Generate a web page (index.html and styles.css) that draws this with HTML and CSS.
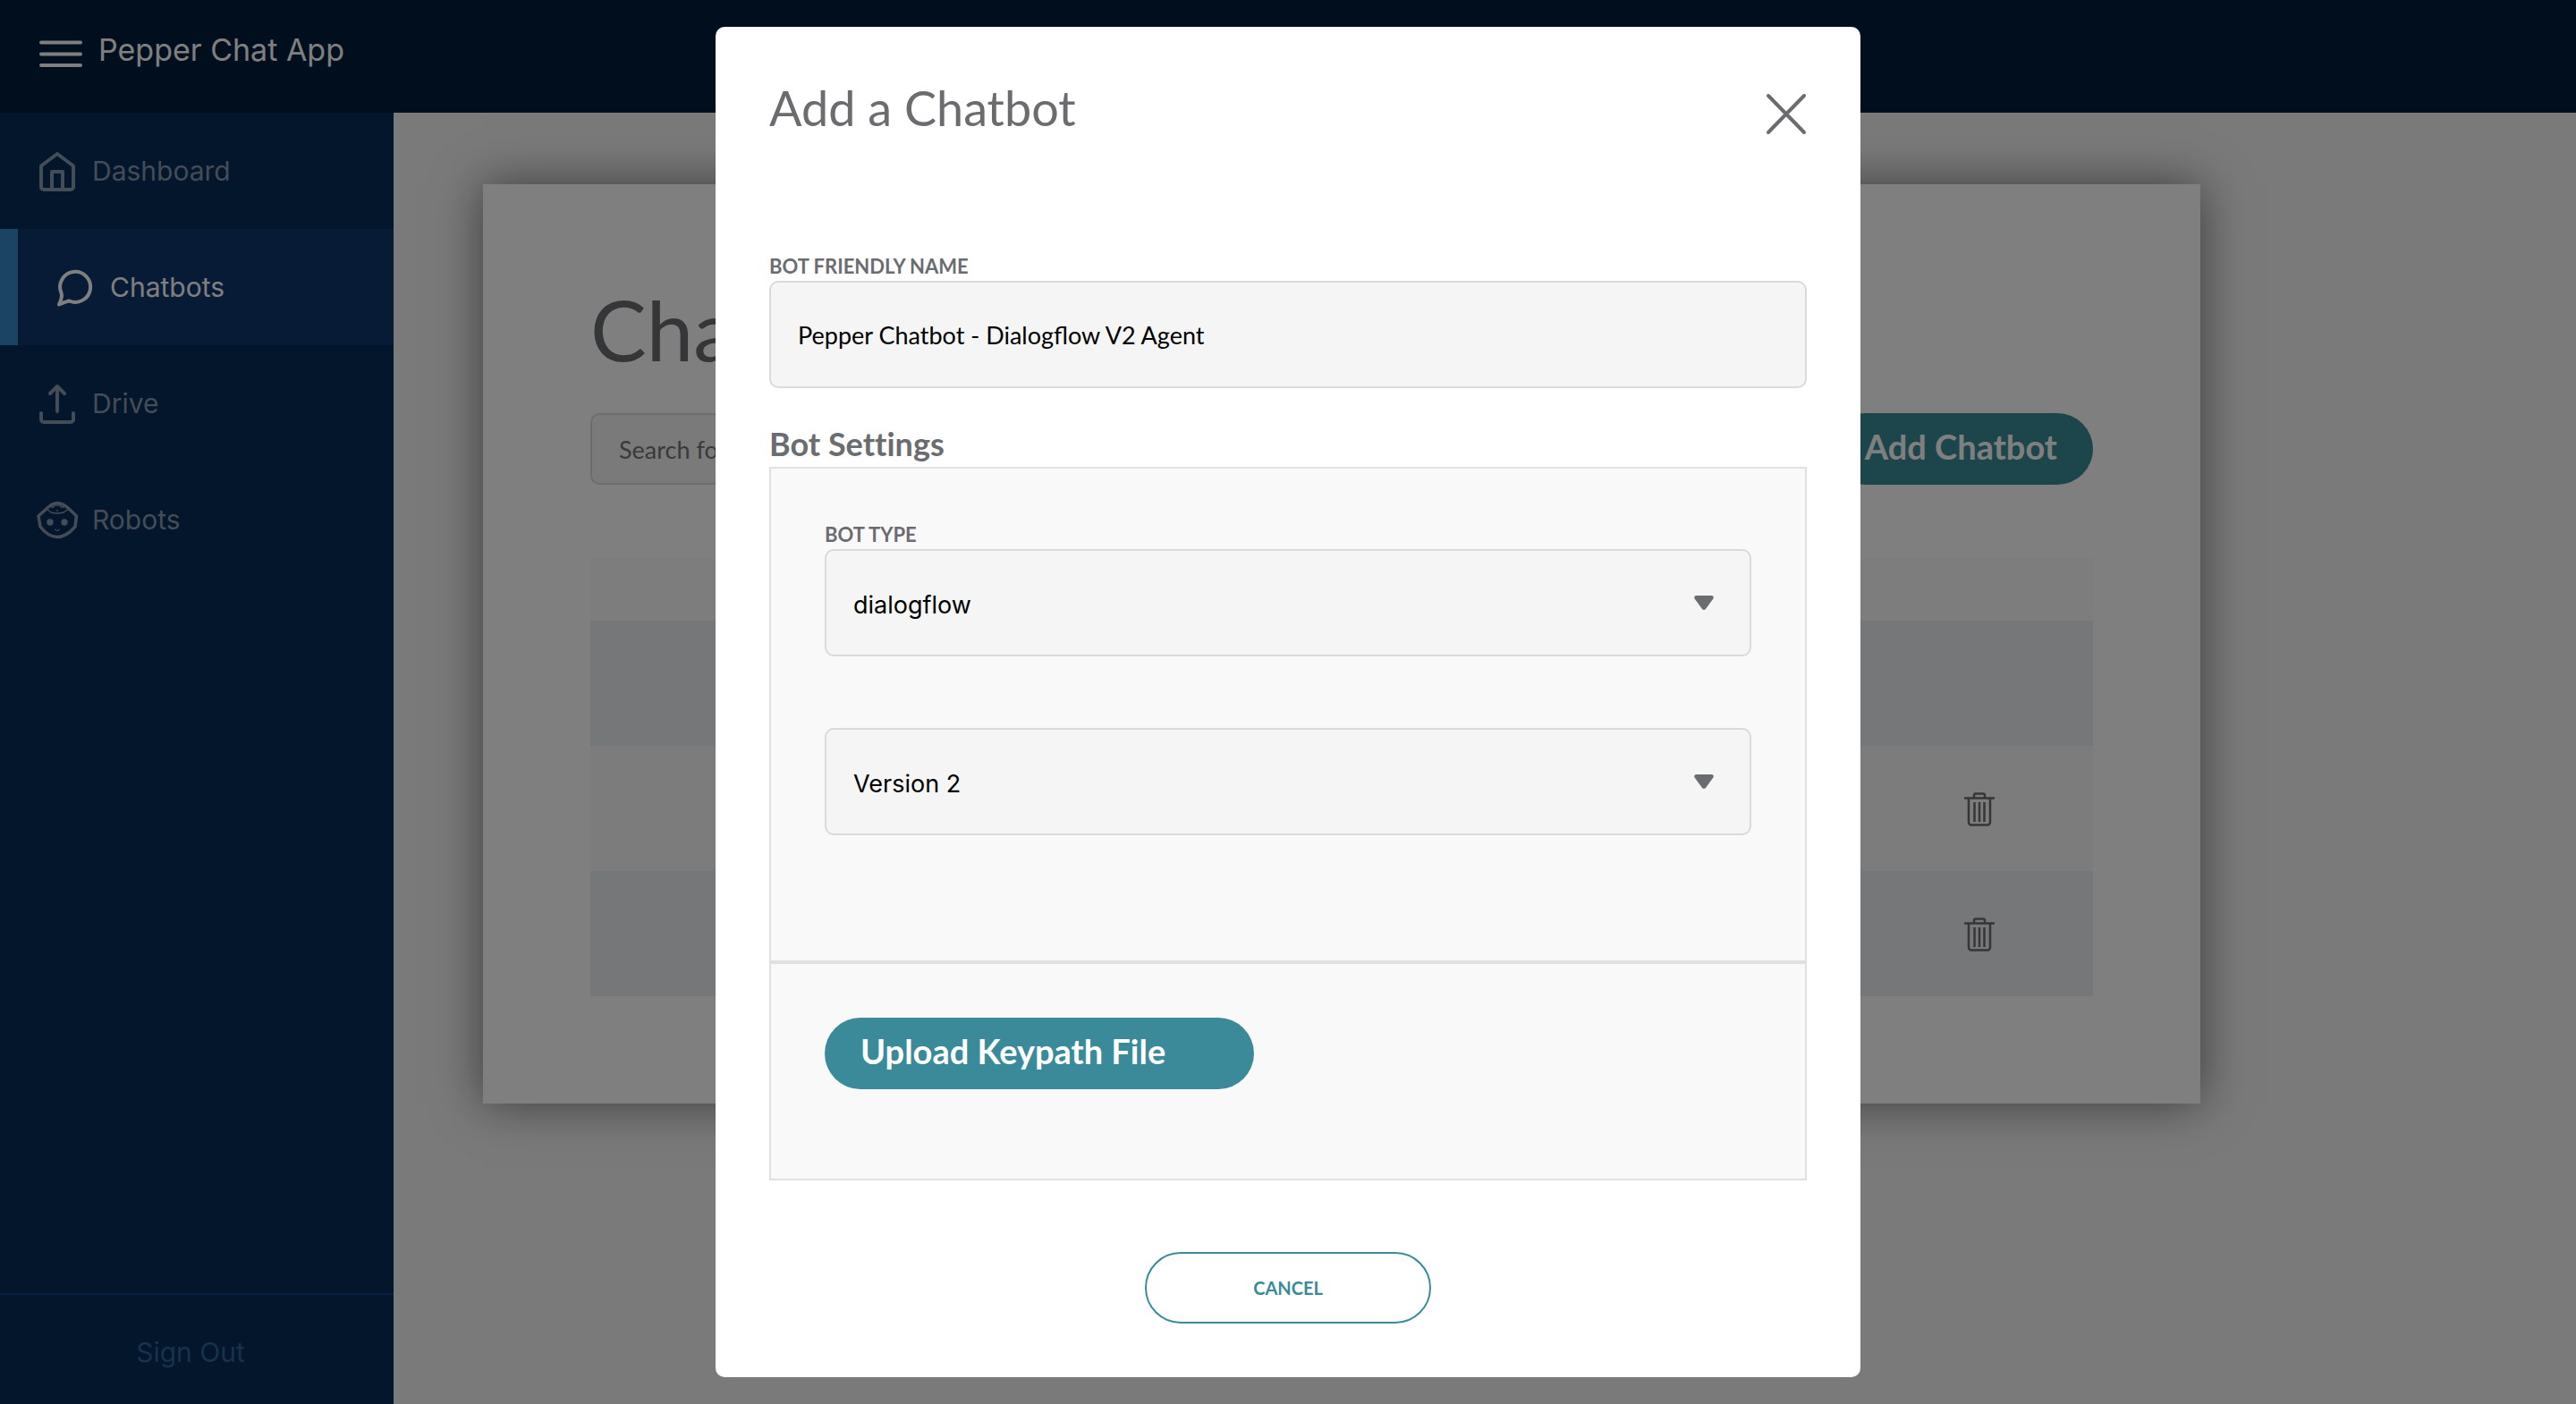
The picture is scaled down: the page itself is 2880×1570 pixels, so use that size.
FILE: index.html
```
<!DOCTYPE html>
<html lang="en">
<head>
<meta charset="utf-8">
<meta name="viewport" content="width=device-width, initial-scale=1">
<title>Pepper Chat App</title>
<link rel="stylesheet" href="styles.css">
</head>
<body>
<div class="app">
  <header class="topbar">
    <button class="icon-button" type="button" aria-label="Menu">
      <svg class="menu-icon" viewBox="0 0 48 40" fill="none" stroke="currentColor" stroke-width="4" stroke-linecap="round"><path d="M2 7.500h44M2 20.500h44M2 33h44"/></svg>
    </button>
    <span class="brand">Pepper Chat App</span>
  </header>
  <nav class="sidebar">
    <a class="nav-item" href="#dashboard">
      <svg class="nav-icon" viewBox="0 0 48 48" fill="none" stroke="currentColor" stroke-width="4" stroke-linejoin="round"><path d="M24 5 L42 18.500V42a3 3 0 0 1-3 3H9a3 3 0 0 1-3-3V18.500z"/><path d="M18 45V25h12v20"/></svg>
      <span>Dashboard</span>
    </a>
    <a class="nav-item nav-item-active" href="#chatbots">
      <svg class="nav-icon" viewBox="0 0 48 48" fill="none" stroke="currentColor" stroke-width="4" stroke-linejoin="round"><path d="M6 43.500c2.500-5 4-9 2.500-13A17 17 0 1 1 17.500 39.500C14 40 10 42 6 43.500z"/></svg>
      <span>Chatbots</span>
    </a>
    <a class="nav-item" href="#drive">
      <svg class="nav-icon" viewBox="0 0 48 48" fill="none" stroke="currentColor" stroke-width="4" stroke-linecap="round" stroke-linejoin="round"><path d="M24 33V5M16 13l8-8 8 8M6 35v7a3 3 0 0 0 3 3h30a3 3 0 0 0 3-3v-7"/></svg>
      <span>Drive</span>
    </a>
    <a class="nav-item" href="#robots">
      <svg class="nav-icon" viewBox="0 0 48 48" fill="none" stroke="currentColor" stroke-width="3.500" stroke-linejoin="round"><path d="M13 11Q24 0 36 11L45.500 20 44 32Q34 43.500 24 43.500T5 32L3 20z"/><path stroke-width="1.500" d="M12 12l5 4q7 2 14 0l6-4M17 10h3V8h8v2h4"/><g fill="currentColor" stroke="none"><circle cx="16" cy="27" r="3.700"/><circle cx="32" cy="27" r="3.700"/><circle cx="24" cy="14" r="1"/></g><path stroke-width="1.200" d="M21.500 34.500q2.500 4 5 0"/></svg>
      <span>Robots</span>
    </a>
    <a class="sign-out" href="#sign-out">Sign Out</a>
  </nav>
  <main class="page">
    <section class="card">
      <h1 class="page-title">Chatbots</h1>
      <div class="toolbar">
        <input class="field search" type="search" placeholder="Search for" aria-label="Search">
        <button class="pill" type="button">Add Chatbot</button>
      </div>
      <table class="bots">
        <colgroup><col><col class="actions-col"></colgroup>
        <thead><tr><th></th><th></th></tr></thead>
        <tbody>
          <tr><td></td><td></td></tr>
          <tr><td></td><td><button class="icon-button" type="button" aria-label="Delete"><svg class="trash-icon" viewBox="0 0 34 38" fill="none" stroke="currentColor" stroke-width="2.500"><path d="M0 6.500h34M11 6V3.500a2 2 0 0 1 2-2h8a2 2 0 0 1 2 2V6M5 7v26.500a3 3 0 0 0 3 3h18a3 3 0 0 0 3-3V7M11.500 11v22M17 11v22M22.500 11v22"/></svg></button></td></tr>
          <tr><td></td><td><button class="icon-button" type="button" aria-label="Delete"><svg class="trash-icon" viewBox="0 0 34 38" fill="none" stroke="currentColor" stroke-width="2.500"><path d="M0 6.500h34M11 6V3.500a2 2 0 0 1 2-2h8a2 2 0 0 1 2 2V6M5 7v26.500a3 3 0 0 0 3 3h18a3 3 0 0 0 3-3V7M11.500 11v22M17 11v22M22.500 11v22"/></svg></button></td></tr>
        </tbody>
      </table>
    </section>
  </main>
</div>

<div class="overlay">
  <form class="modal" role="dialog" aria-modal="true" aria-labelledby="modal-title">
    <header class="modal-header">
      <h2 class="modal-title" id="modal-title">Add a Chatbot</h2>
      <button class="icon-button" type="button" aria-label="Close">
        <svg class="close-icon" viewBox="0 0 50 50" fill="none" stroke="currentColor" stroke-width="4" stroke-linecap="round"><path d="M7 5l40 41M47 5L7 46"/></svg>
      </button>
    </header>
    <label class="label" for="bot-name">BOT FRIENDLY NAME</label>
    <input class="field" id="bot-name" type="text" value="Pepper Chatbot - Dialogflow V2 Agent">
    <h3 class="settings-title">Bot Settings</h3>
    <div class="panel">
      <div class="panel-section panel-selects">
        <div>
          <label class="label" for="bot-type">BOT TYPE</label>
          <div class="select-wrap">
            <select class="field select" id="bot-type"><option>dialogflow</option></select>
            <svg class="arrow" viewBox="0 0 22 16"><path fill="currentColor" d="M2 0h18q3 1 1 4l-8 11q-2 2-4 0L1 4Q-1 1 2 0z"/></svg>
          </div>
        </div>
        <div class="select-wrap">
          <select class="field select" aria-label="Version"><option>Version 2</option></select>
          <svg class="arrow" viewBox="0 0 22 16"><path fill="currentColor" d="M2 0h18q3 1 1 4l-8 11q-2 2-4 0L1 4Q-1 1 2 0z"/></svg>
        </div>
      </div>
      <div class="panel-section panel-upload">
        <button class="pill pill-wide" type="button">Upload Keypath File</button>
      </div>
    </div>
    <button class="cancel" type="button">CANCEL</button>
  </form>
</div>
</body>
</html>
```
FILE: styles.css
```
* { box-sizing: border-box; }

body {
  margin: 0;
  font-family: Lato, sans-serif;
  color: #6b6c70;
  background: #f4f4f4;
}

h1, h2, h3 { margin: 0; font-weight: 400; }
button, input, select { font: inherit; color: inherit; margin: 0; }
svg { display: block; }

.icon-button {
  padding: 0;
  border: 0;
  background: none;
  cursor: pointer;
}

/* App shell */
.app {
  display: grid;
  grid-template: 126px 1fr / 440px 1fr;
  min-height: 100vh;
}

.topbar {
  grid-column: 1 / -1;
  display: flex;
  align-items: flex-end;
  gap: 18px;
  padding: 0 44px 46px;
  color: #fff;
  background: #021c3c;
}
.menu-icon { width: 48px; height: 40px; }
.brand { font: 34px/48px Inter, sans-serif; }

.sidebar {
  display: flex;
  flex-direction: column;
  font: 30px/36px Inter, sans-serif;
  background: #062c56;
}
.nav-item {
  display: flex;
  align-items: center;
  gap: 15px;
  height: 130px;
  padding: 0 40px;
  color: #8898b0;
  text-decoration: none;
}
.nav-item-active {
  color: #fff;
  background: #0e366c;
  border-left: 20px solid #3688c8;
}
.nav-icon { width: 48px; height: 48px; }
.sign-out {
  margin-top: auto;
  padding: 46px 14px 40px 0;
  border-top: 2px solid #14428e;
  color: #2e649a;
  text-align: center;
  text-decoration: none;
}

/* Chatbots page */
.page { padding: 80px 100px; }
.card {
  max-width: 1920px;
  padding: 100px 120px 120px;
  background: #fff;
  box-shadow: 0 0 50px rgba(0, 0, 0, 0.5);
}
.page-title { font-size: 94px; line-height: 124px; }
.toolbar {
  display: flex;
  justify-content: space-between;
  margin: 32px 0 82px;
}

.field {
  display: block;
  width: 100%;
  height: 120px;
  padding: 0 30px;
  border: 2px solid #dadada;
  border-radius: 10px;
  font-size: 27px;
  color: #000;
  background: #f5f5f5;
}
.search { width: 600px; height: 80px; appearance: none; }
.search::placeholder { color: #757575; opacity: 1; }

.pill {
  height: 80px;
  padding: 0 40px 6px;
  border: 0;
  border-radius: 40px;
  font-size: 38px;
  font-weight: 700;
  color: #fff;
  background: #3b8a99;
}
.pill-wide { width: 480px; text-align: left; }

.bots {
  width: 100%;
  table-layout: fixed;
  border-collapse: collapse;
}
.bots th { height: 70px; background: #fbfbfb; }
.bots td { height: 140px; padding: 2px 0 0; background: #f9f9f9; }
.bots tbody tr:nth-child(odd) td { background: #eceef2; }
.bots .icon-button { display: block; margin: 0 auto; }
.actions-col { width: 254px; }
.trash-icon { width: 34px; height: 38px; }

/* Modal */
.overlay {
  position: fixed;
  inset: 0;
  display: flex;
  align-items: center;
  justify-content: center;
  background: rgba(0, 0, 0, 0.5);
}
.modal {
  width: 1280px;
  max-width: 100%;
  padding: 60px;
  border-radius: 10px;
  background: #fff;
}
.modal-header {
  display: flex;
  align-items: flex-end;
  justify-content: space-between;
  margin-bottom: 132px;
}
.modal-title { font-size: 54px; line-height: 62px; }
.close-icon { width: 50px; height: 50px; }
.label {
  display: block;
  margin-bottom: 2px;
  font-size: 22px;
  line-height: 28px;
  font-weight: 700;
}
.settings-title {
  margin: 38px 0 2px;
  font-size: 36px;
  line-height: 48px;
  font-weight: 700;
  font-variant-ligatures: none;
}

.panel { border: 2px solid #e0e0e0; background: #f9f9f9; }
.panel-section { padding: 60px; }
.panel-selects {
  display: grid;
  gap: 80px;
  padding-bottom: 140px;
}
.panel-upload {
  padding-bottom: 100px;
  border-top: 4px solid #e0e0e0;
}
.select-wrap { display: grid; align-items: center; }
.select-wrap > * { grid-area: 1 / 1; }
.select {
  appearance: none;
  padding-top: 4px;
  font-family: Inter, sans-serif;
}
.arrow {
  width: 22px;
  height: 16px;
  margin-right: 42px;
  justify-self: end;
  pointer-events: none;
}

.pill-wide, .cancel { display: block; }
.cancel {
  width: 320px;
  height: 80px;
  margin: 80px auto 0;
  border: 2px solid #3b8a99;
  border-radius: 40px;
  font-size: 20px;
  font-weight: 700;
  color: #3b8a99;
  background: #fff;
}
```
